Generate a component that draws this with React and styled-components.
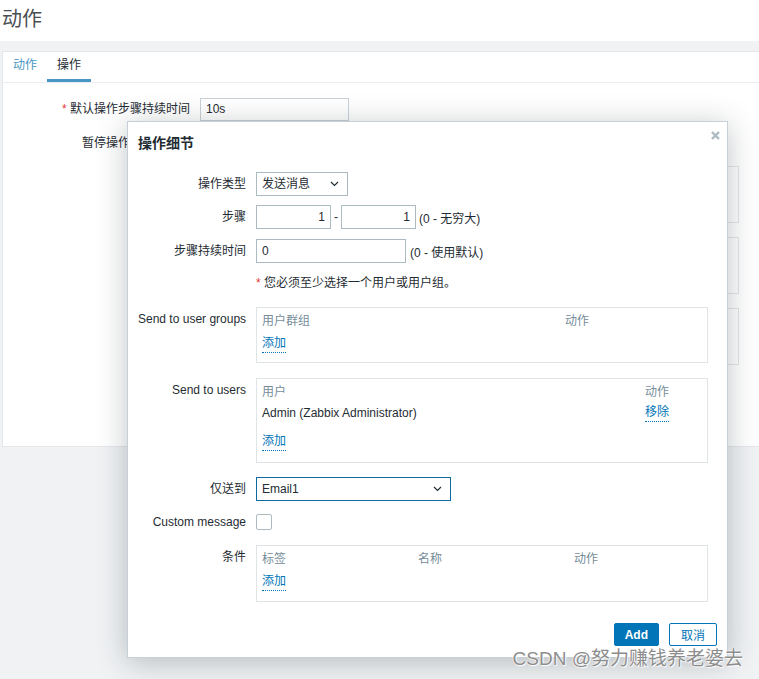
import React from 'react';
import styled, { createGlobalStyle } from 'styled-components';

const GlobalStyle = createGlobalStyle`
  html, body {
    margin: 0;
    padding: 0;
    background: #f0f2f4;
  }
  body {
    font-family: "Liberation Sans", "Noto Sans CJK SC", sans-serif;
    font-size: 12px;
    color: #1f2c33;
  }
  * { box-sizing: border-box; }
`;

const Page = styled.div`
  position: relative;
  width: 759px;
  height: 679px;
  overflow: hidden;
`;

const Header = styled.header`
  height: 41px;
  background: #fff;
  display: flex;
  align-items: center;
  padding-left: 2px;
  h1 {
    margin: 0;
    font-size: 20px;
    font-weight: 400;
    color: #4a4f52;
    line-height: 26px;
    padding-bottom: 4px;
  }
`;

const Panel = styled.section`
  margin: 10px 0 0 2px;
  background: #fff;
  border: 1px solid #e3e7ea;
  border-right: none;
  min-height: 396px;
`;

const Tabs = styled.nav`
  display: flex;
  border-bottom: 1px solid #ebeef0;
`;

const Tab = styled.span`
  height: 30px;
  line-height: 27px;
  padding: 0 10px;
  border-bottom: 3px solid ${p => (p.$active ? '#4796c4' : 'transparent')};
  color: ${p => (p.$active ? '#1f2c33' : '#4796c4')};
`;

const BgForm = styled.div`
  padding-top: 15px;
`;

const BgRow = styled.div`
  display: grid;
  grid-template-columns: 187px 539px;
  column-gap: 10px;
  margin-top: ${p => p.$mt || 0}px;
`;

const BgLabel = styled.label`
  text-align: right;
  line-height: 23px;
  color: #1f2c33;
  &::before {
    content: ${p => (p.$required ? "'* '" : "''")};
    color: #e33734;
  }
`;

const BgInput = styled.div`
  width: 149px;
  height: 23px;
  border: 1px solid #c9d2d8;
  padding: 0 5px;
  line-height: 21px;
`;

const BgBox = styled.div`
  height: 57px;
  border: 1px solid #e3e7ea;
`;

const Modal = styled.div`
  position: absolute;
  left: 127px;
  top: 121px;
  width: 601px;
  background: #fff;
  border: 1px solid #c7d0d6;
  box-shadow: 0 4px 28px rgba(31, 44, 51, 0.28);
  padding: 0 18px 11px 10px;
`;

const CloseBtn = styled.button`
  position: absolute;
  top: 6px;
  right: 5px;
  width: 14px;
  height: 14px;
  padding: 0;
  border: none;
  background: transparent;
  display: flex;
  align-items: center;
  justify-content: center;
`;

const ModalTitle = styled.h4`
  margin: 0 0 20px;
  padding-top: 12px;
  font-size: 14px;
  line-height: 18px;
  font-weight: 700;
  color: #1f2c33;
`;

const Row = styled.div`
  display: grid;
  grid-template-columns: 108px 452px;
  column-gap: 10px;
  align-items: start;
  margin-top: ${p => p.$mt || 0}px;
`;

const Label = styled.label`
  text-align: right;
  line-height: 24px;
  white-space: nowrap;
`;

const Field = styled.div`
  display: flex;
  align-items: center;
  gap: ${p => p.$gap ?? 4}px;
  min-height: ${p => p.$h || 0}px;
`;

const Input = styled.div`
  width: ${p => p.$w}px;
  height: 24px;
  border: 1px solid #acbbc2;
  padding: 0 5px;
  line-height: 22px;
  color: #1f2c33;
  text-align: ${p => (p.$right ? 'right' : 'left')};
`;

const SelectBox = styled.div`
  width: ${p => p.$w}px;
  height: 24px;
  border: 1px solid ${p => (p.$focus ? '#0b6aa3' : '#acbbc2')};
  padding: 0 8px 0 5px;
  display: flex;
  align-items: center;
  justify-content: space-between;
  line-height: 22px;
`;

const Note = styled.span`
  white-space: nowrap;
`;

const Warning = styled.div`
  grid-column: 2;
  line-height: 16px;
  &::before {
    content: '* ';
    color: #e33734;
  }
`;

const Box = styled.div`
  border: 1px solid #dfe4e7;
  padding: 4px 5px ${p => p.$pb}px;
`;

const TRow = styled.div`
  display: grid;
  grid-template-columns: ${p => p.$cols};
  line-height: 18px;
  padding-top: ${p => p.$pt || 0}px;
  color: ${p => (p.$head ? '#768d99' : '#1f2c33')};
`;

const Link = styled.a`
  color: #0275b8;
  text-decoration: none;
  line-height: 17px;
  border-bottom: 1px dotted #0275b8;
  justify-self: start;
  cursor: pointer;
`;

const Checkbox = styled.span`
  width: 16px;
  height: 16px;
  border: 1px solid #acbbc2;
  border-radius: 2px;
  background: #fff;
`;

const Footer = styled.div`
  display: flex;
  justify-content: flex-end;
  gap: 10px;
  margin-top: 21px;
  margin-right: -8px;
`;

const Button = styled.button`
  height: 23px;
  padding: 0 ${p => (p.$primary ? 10 : 11)}px;
  border: 1px solid #0275b8;
  border-radius: 2px;
  background: ${p => (p.$primary ? '#0275b8' : '#fff')};
  color: ${p => (p.$primary ? '#fff' : '#0275b8')};
  font: ${p => (p.$primary ? 700 : 400)} 12px "Liberation Sans", "Noto Sans CJK SC", sans-serif;
`;

const Watermark = styled.div`
  position: absolute;
  right: 16px;
  bottom: 8px;
  font-size: 19px;
  line-height: 24px;
  color: #8d8d8d;
  text-shadow: 0 0 1px #fff, 0 0 2px #fff, 1px 1px 1px #fff;
  white-space: nowrap;
`;

const Chevron = () => (
  <svg width="9" height="6" viewBox="0 0 9 6">
    <polyline points="1,1 4.5,4.5 8,1" fill="none" stroke="#1f2c33" strokeWidth="1.2" />
  </svg>
);

const CloseIcon = () => (
  <svg width="9" height="9" viewBox="0 0 9 9">
    <path d="M1 1 L8 8 M8 1 L1 8" stroke="#acbbc2" strokeWidth="2.4" strokeLinecap="butt" />
  </svg>
);

export default function App() {
  return (
    <Page>
      <GlobalStyle />
      <Header>
        <h1>动作</h1>
      </Header>
      <Panel>
        <Tabs>
          <Tab>动作</Tab>
          <Tab $active>操作</Tab>
        </Tabs>
        <BgForm>
          <BgRow>
            <BgLabel $required>默认操作步骤持续时间</BgLabel>
            <BgInput>10s</BgInput>
          </BgRow>
          <BgRow $mt={11}>
            <BgLabel>暂停操作以制止问题</BgLabel>
            <div />
          </BgRow>
          <BgRow $mt={11}>
            <div />
            <BgBox />
          </BgRow>
          <BgRow $mt={14}>
            <div />
            <BgBox />
          </BgRow>
          <BgRow $mt={14}>
            <div />
            <BgBox />
          </BgRow>
        </BgForm>
      </Panel>

      <Modal>
        <CloseBtn><CloseIcon /></CloseBtn>
        <ModalTitle>操作细节</ModalTitle>

        <Row>
          <Label>操作类型</Label>
          <Field>
            <SelectBox $w={92}>发送消息<Chevron /></SelectBox>
          </Field>
        </Row>
        <Row $mt={9}>
          <Label>步骤</Label>
          <Field $gap={3}>
            <Input $w={75} $right>1</Input>
            <span>-</span>
            <Input $w={75} $right>1</Input>
            <Note>(0 - 无穷大)</Note>
          </Field>
        </Row>
        <Row $mt={10}>
          <Label>步骤持续时间</Label>
          <Field>
            <Input $w={150}>0</Input>
            <Note>(0 - 使用默认)</Note>
          </Field>
        </Row>
        <Row $mt={12}>
          <Warning>您必须至少选择一个用户或用户组。</Warning>
        </Row>
        <Row $mt={16}>
          <Label>Send to user groups</Label>
          <Box $pb={9}>
            <TRow $head $cols="303px 1fr">
              <span>用户群组</span>
              <span>动作</span>
            </TRow>
            <TRow $pt={5} $cols="1fr">
              <Link>添加</Link>
            </TRow>
          </Box>
        </Row>
        <Row $mt={15}>
          <Label>Send to users</Label>
          <Box $pb={11}>
            <TRow $head $cols="383px 1fr">
              <span>用户</span>
              <span>动作</span>
            </TRow>
            <TRow $pt={3} $cols="383px 1fr">
              <span>Admin (Zabbix Administrator)</span>
              <Link>移除</Link>
            </TRow>
            <TRow $pt={11} $cols="1fr">
              <Link>添加</Link>
            </TRow>
          </Box>
        </Row>
        <Row $mt={14}>
          <Label>仅送到</Label>
          <Field>
            <SelectBox $w={195} $focus>Email1<Chevron /></SelectBox>
          </Field>
        </Row>
        <Row $mt={9}>
          <Label>Custom message</Label>
          <Field $h={24}>
            <Checkbox />
          </Field>
        </Row>
        <Row $mt={11}>
          <Label>条件</Label>
          <Box $pb={10}>
            <TRow $head $cols="156px 156px 1fr">
              <span>标签</span>
              <span>名称</span>
              <span>动作</span>
            </TRow>
            <TRow $pt={5} $cols="1fr">
              <Link>添加</Link>
            </TRow>
          </Box>
        </Row>

        <Footer>
          <Button $primary>Add</Button>
          <Button>取消</Button>
        </Footer>
      </Modal>

      <Watermark>CSDN @努力赚钱养老婆去</Watermark>
    </Page>
  );
}
